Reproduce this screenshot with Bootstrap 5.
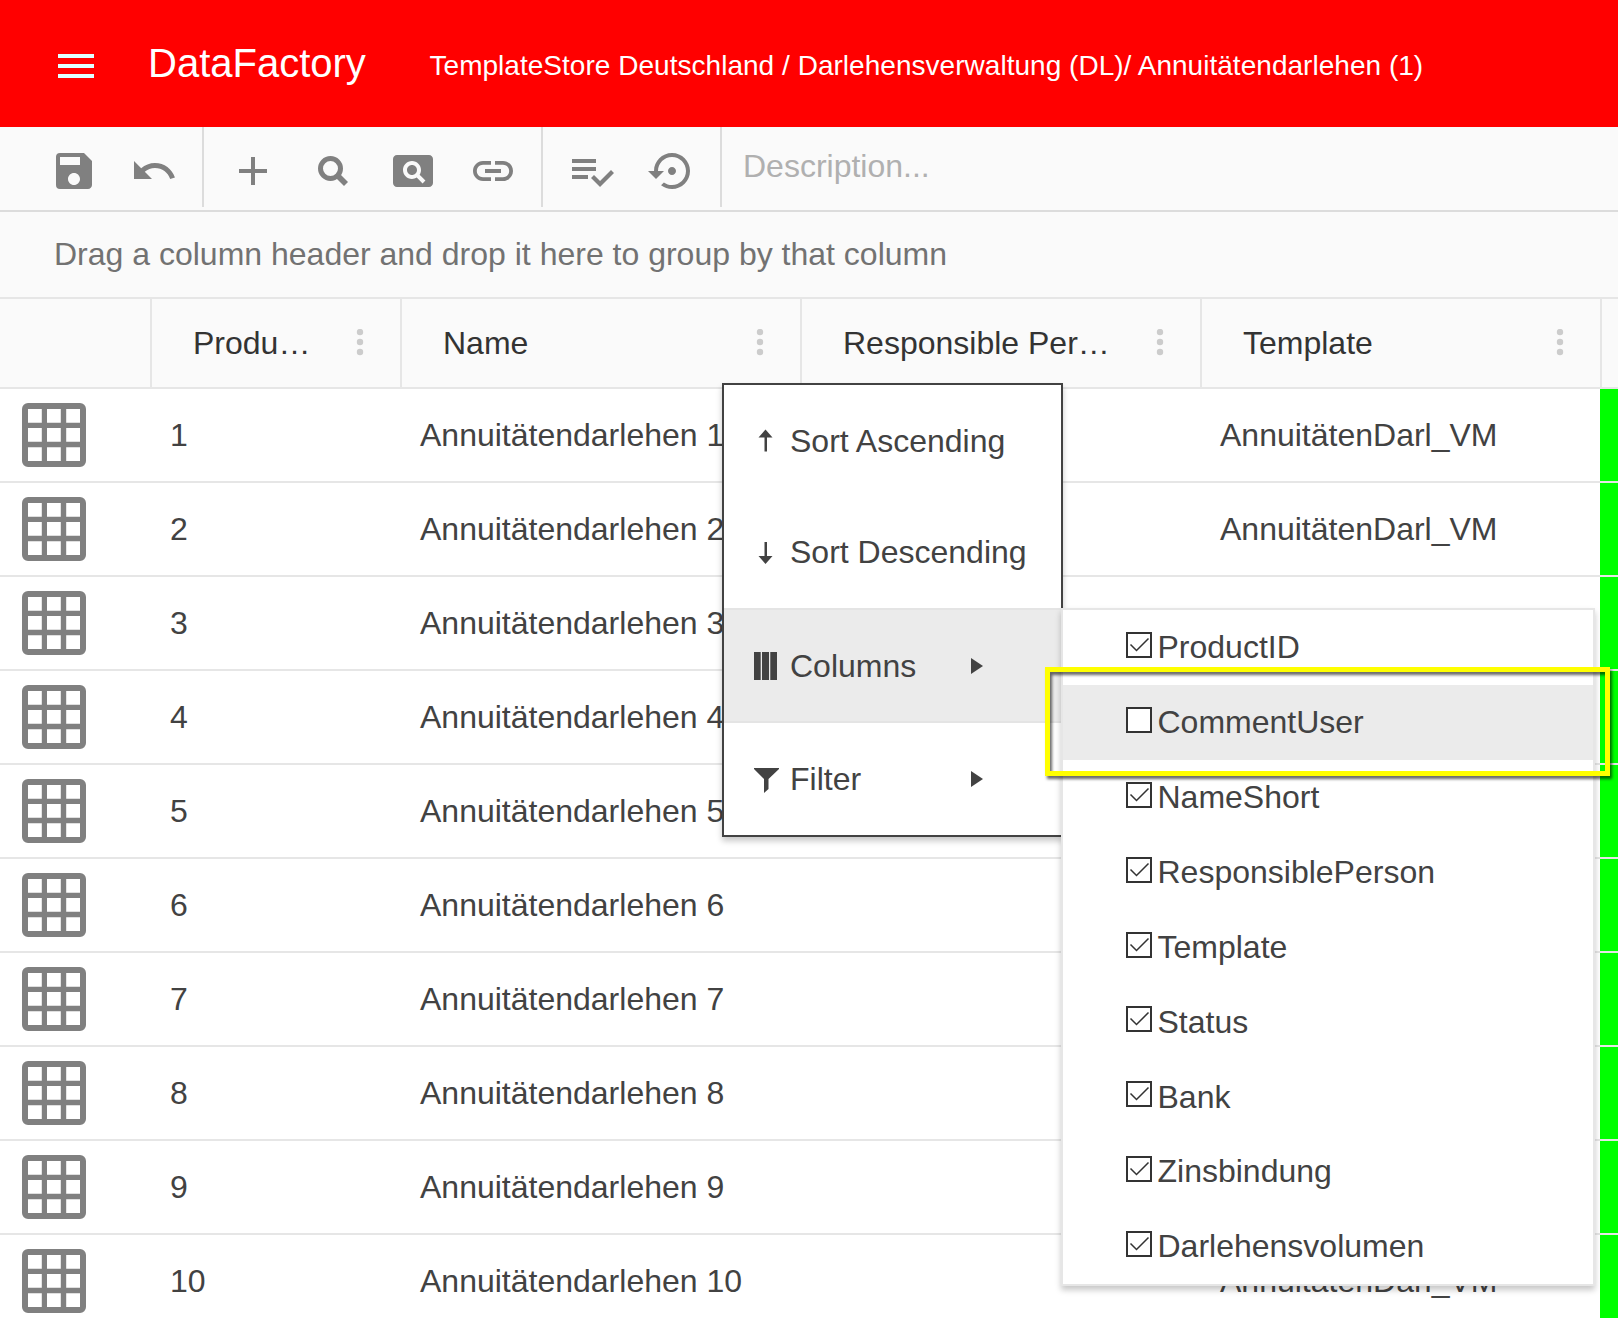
<!DOCTYPE html>
<html lang="de">
<head>
<meta charset="utf-8">
<title>DataFactory</title>
<link href="https://cdn.jsdelivr.net/npm/bootstrap@5.3.0/dist/css/bootstrap.min.css" rel="stylesheet">
<style>
body{font-family:"Liberation Sans",Arial,sans-serif;font-size:32px;line-height:1.2;color:#424242;width:1618px;height:1318px;overflow:hidden;background:#fff}
.app-bar{height:127px;background:#f00;color:#fff}
.burger{width:36px;height:24px;margin-left:58px;margin-right:54px;margin-top:5px;fill:#e0ffff}
.brand-name{font-size:40px;line-height:46px;width:281px;margin-top:-1px}
.crumbs{font-size:28px;line-height:32px;margin-top:4px;padding-left:.5px;letter-spacing:.03px}
.tool-bar{height:85px;background:#fafafa;border-bottom:2px solid #dcdcdc}
.tool-group{height:80px;border-right:2px solid #dcdcdc;padding-top:20px}
.tool-group svg{width:48px;height:48px;fill:#808080;display:block}
.tool-btn{padding:0;border:0;background:none;border-radius:0;line-height:1}
.tool-group.g1{width:204px;padding-left:50px;gap:32px}
.tool-group.g2{width:339px;padding-left:25px;gap:32px}
.tool-group.g3{width:179px;padding-left:25px;gap:32px}
.desc-field{border:0;background:transparent;padding:0;font-size:32px;line-height:38px;height:38px;width:700px;margin:20px 0 0 21px;color:#424242;outline:0}
.desc-field::placeholder{color:#b0b0b0;opacity:1}
.group-hint{height:87px;background:#fafafa;border-bottom:2px solid #e6e6e6;padding-left:54px;color:#727272}
.grid-head{height:90px;background:#fafafa;border-bottom:2px solid #e6e6e6;color:#333}
.head-cell{height:88px;border-right:2px solid #e6e6e6;padding-left:41px;padding-right:36px;flex:none}
.head-cell svg{width:8px;height:28px;fill:#ccc}
.w-icon{width:152px;flex:none}.w-id{width:250px;flex:none}.w-col{width:400px;flex:none}.w-tpl{width:398px;flex:none}
.grid-row{height:94px;border-bottom:2px solid #e6e6e6}
.grid-row>.cell{padding-left:18px}
.grid-row .w-icon svg{width:64px;height:64px;margin-left:22px;display:block}
.status-cell{background:#0f0;height:92px}
.menu-box{position:absolute;left:722px;top:383px;width:341px;height:454px;background:#fff;border:2px solid #424242;box-shadow:0 4px 6px rgba(0,0,0,.22)}
.menu-entry{height:112px;padding-left:30px}
.menu-entry.second{height:111px}
.menu-entry.open{height:115px;background:#ebebeb;border-top:2px solid #e4e4e4;border-bottom:2px solid #e4e4e4}
.menu-entry.open .lbl{padding-top:2px}
.menu-entry .ico{width:28px;height:30px;margin-right:8px;fill:#424242}
.menu-entry .lbl{width:180.5px}
.menu-entry .arr{width:12px;height:16px;fill:#424242}
.sub-box{position:absolute;left:1061px;top:608px;width:534px;height:678px;background:#fff;border:2px solid #e6e6e6;box-shadow:0 4px 6px rgba(0,0,0,.22)}
.sub-entry{height:74.9px;padding-left:63px}
.sub-entry.hovered{background:#ebebeb}
.sub-entry svg{width:26px;height:26px;margin-right:5.5px;margin-top:-5px;flex:none}
.marker{position:absolute;left:1045px;top:667px;width:565px;height:109px;border:5px solid #ff0;filter:drop-shadow(2px 3px 1.5px rgba(0,0,0,.6))}
</style>
<script src="https://cdn.jsdelivr.net/npm/bootstrap@5.3.0/dist/js/bootstrap.bundle.min.js"></script>
</head>
<body class="position-relative">
<header class="app-bar d-flex align-items-center">
  <svg class="burger" viewBox="0 0 36 24"><path d="M0 0h36v4H0zM0 10h36v4H0zM0 20h36v4H0z"/></svg>
  <div class="brand-name text-nowrap">DataFactory</div>
  <div class="crumbs text-nowrap">TemplateStore Deutschland / Darlehensverwaltung (DL)/ Annuitätendarlehen (1)</div>
</header>

<div class="tool-bar d-flex">
  <div class="tool-group g1 d-flex align-items-start">
    <button class="tool-btn"><svg viewBox="0 0 24 24"><path d="M17 3H5a2 2 0 0 0-2 2v14a2 2 0 0 0 2 2h14c1.1 0 2-.9 2-2V7l-4-4zm-5 16c-1.660 0-3-1.340-3-3s1.340-3 3-3 3 1.340 3 3-1.340 3-3 3zm3-10H5V5h10v4z"/></svg></button>
    <button class="tool-btn"><svg viewBox="0 0 24 24"><path d="M12.500 8c-2.650 0-5.050.99-6.900 2.600L2 7v9h9l-3.620-3.620c1.390-1.160 3.160-1.880 5.120-1.880 3.540 0 6.550 2.310 7.600 5.500l2.370-.78C21.080 11.030 17.150 8 12.500 8z"/></svg></button>
  </div>
  <div class="tool-group g2 d-flex align-items-start">
    <button class="tool-btn"><svg viewBox="0 0 24 24"><path d="M19 13h-6v6h-2v-6H5v-2h6V5h2v6h6z"/></svg></button>
    <button class="tool-btn"><svg viewBox="0 0 48 48"><circle cx="21.5" cy="21.5" r="10" fill="none" stroke="#808080" stroke-width="5"/><path d="M27 31L31 27L39 35L35 39z"/></svg></button>
    <button class="tool-btn"><svg viewBox="0 0 24 24"><path d="M11.500 9C10.120 9 9 10.120 9 11.500s1.120 2.500 2.500 2.500 2.500-1.120 2.500-2.500S12.880 9 11.500 9zM20 4H4c-1.100 0-2 .9-2 2v12c0 1.100.9 2 2 2h16c1.100 0 2-.9 2-2V6c0-1.100-.9-2-2-2zm-3.210 14.210l-2.910-2.910c-.69.44-1.510.7-2.390.7C9.010 16 7 13.990 7 11.500S9.010 7 11.500 7 16 9.010 16 11.500c0 .88-.26 1.690-.7 2.390l2.910 2.900-1.420 1.420z"/></svg></button>
    <button class="tool-btn"><svg viewBox="0 0 24 24"><path d="M3.900 12c0-1.710 1.390-3.100 3.100-3.100h4V7H7c-2.760 0-5 2.240-5 5s2.240 5 5 5h4v-1.900H7c-1.710 0-3.100-1.390-3.100-3.100zM8 13h8v-2H8v2zm9-6h-4v1.900h4c1.710 0 3.100 1.390 3.100 3.100s-1.390 3.100-3.100 3.100h-4V17h4c2.760 0 5-2.240 5-5s-2.240-5-5-5z"/></svg></button>
  </div>
  <div class="tool-group g3 d-flex align-items-start">
    <button class="tool-btn"><svg viewBox="0 0 24 24"><path d="M14 10H2v2h12v-2zm0-4H2v2h12V6zM2 16h8v-2H2v2zm19.500-4.500L23 13l-6.990 7-4.510-4.500L13 14l3.010 3 5.490-5.500z"/></svg></button>
    <button class="tool-btn"><svg viewBox="0 0 24 24"><path d="M14 12c0-1.100-.9-2-2-2s-2 .9-2 2 .9 2 2 2 2-.9 2-2zm-2-9c-4.970 0-9 4.030-9 9H0l4 4 4-4H5c0-3.870 3.130-7 7-7s7 3.130 7 7-3.130 7-7 7c-1.510 0-2.910-.49-4.060-1.300l-1.420 1.440C8.040 20.300 9.940 21 12 21c4.970 0 9-4.030 9-9s-4.030-9-9-9z"/></svg></button>
  </div>
  <input class="desc-field" placeholder="Description...">
</div>

<div class="group-hint d-flex align-items-center">Drag a column header and drop it here to group by that column</div>

<div class="grid-head d-flex">
  <div class="head-cell w-icon"></div>
  <div class="head-cell w-id d-flex align-items-center justify-content-between"><span>Produ…</span><svg viewBox="0 0 8 28"><circle cx="4" cy="3" r="3.2"/><circle cx="4" cy="13" r="3.2"/><circle cx="4" cy="23" r="3.2"/></svg></div>
  <div class="head-cell w-col d-flex align-items-center justify-content-between"><span>Name</span><svg viewBox="0 0 8 28"><circle cx="4" cy="3" r="3.2"/><circle cx="4" cy="13" r="3.2"/><circle cx="4" cy="23" r="3.2"/></svg></div>
  <div class="head-cell w-col d-flex align-items-center justify-content-between"><span>Responsible Per…</span><svg viewBox="0 0 8 28"><circle cx="4" cy="3" r="3.2"/><circle cx="4" cy="13" r="3.2"/><circle cx="4" cy="23" r="3.2"/></svg></div>
  <div class="head-cell w-col d-flex align-items-center justify-content-between"><span>Template</span><svg viewBox="0 0 8 28"><circle cx="4" cy="3" r="3.2"/><circle cx="4" cy="13" r="3.2"/><circle cx="4" cy="23" r="3.2"/></svg></div>
</div>
<main id="rows"></main>

<div class="menu-box">
  <div class="menu-entry d-flex align-items-center"><svg class="ico" viewBox="0 0 28 30"><path d="M11.500 3.500L18.500 11.500H13V25.500H10.500V11.500H4.500z"/></svg><span class="lbl text-nowrap">Sort Ascending</span></div>
  <div class="menu-entry second d-flex align-items-center"><svg class="ico" viewBox="0 0 28 30"><path d="M11.500 26L18.500 18H13V4H10.500V18H4.500z"/></svg><span class="lbl text-nowrap">Sort Descending</span></div>
  <div class="menu-entry open d-flex align-items-center"><svg class="ico" viewBox="0 0 28 30"><path d="M0 1h6.700v28H0zM8 1h7v28H8zM16.300 1H23v28h-6.700z"/></svg><span class="lbl">Columns</span><svg class="arr" viewBox="0 0 12 16"><path d="M0 0l12 8-12 8z"/></svg></div>
  <div class="menu-entry d-flex align-items-center"><svg class="ico" viewBox="0 0 28 30"><path d="M0 4h25v1L14.500 15v10L10 29V15L0 5z"/></svg><span class="lbl">Filter</span><svg class="arr" viewBox="0 0 12 16"><path d="M0 0l12 8-12 8z"/></svg></div>
</div>
<div class="sub-box" id="cols"></div>
<div class="marker"></div>

<script>
const grid = '<svg viewBox="0 0 64 64"><path fill="#808080" fill-rule="evenodd" d="M6 0H58a6 6 0 0 1 6 6V58a6 6 0 0 1-6 6H6a6 6 0 0 1-6-6V6a6 6 0 0 1 6-6z' +
  [6, 25, 44.2].flatMap(x => [6, 25, 44.2].map(y => `M${x} ${y}h13.800v13.800h-13.800z`)).join('') + '"/></svg>';
const templates = { 1: 'AnnuitätenDarl_VM', 2: 'AnnuitätenDarl_VM', 10: 'AnnuitätenDarl_VM' };
for (let i = 1; i <= 10; i++) {
  document.getElementById('rows').insertAdjacentHTML('beforeend',
    `<div class="grid-row d-flex align-items-center"><div class="w-icon">${grid}</div><div class="cell w-id">${i}</div><div class="cell w-col">Annuitätendarlehen ${i}</div><div class="cell w-col"></div><div class="cell w-tpl">${templates[i] || ''}</div><div class="status-cell flex-grow-1"></div></div>`);
}
['ProductID', 'CommentUser', 'NameShort', 'ResponsiblePerson', 'Template', 'Status', 'Bank', 'Zinsbindung', 'Darlehensvolumen'].forEach((name, i) => {
  const off = i === 1;
  document.getElementById('cols').insertAdjacentHTML('beforeend',
    `<div class="sub-entry d-flex align-items-center${off ? ' hovered' : ''}"><svg viewBox="0 0 26 26"><rect x="1" y="1" width="24" height="24" fill="#fff" stroke="#333" stroke-width="2"/>${off ? '' : '<path d="M4.500 12.500l6 6L22.500 6.500" fill="none" stroke="#333" stroke-width="1.500"/>'}</svg><span>${name}</span></div>`);
});
</script>
</body>
</html>
